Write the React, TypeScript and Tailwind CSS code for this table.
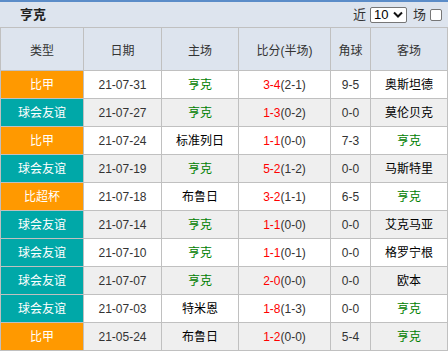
import React from "react";

type Row = {
  type: string;
  color: "o" | "t";
  date: string;
  home: string;
  score: string;
  half: string;
  corner: string;
  away: string;
};

const rows: Row[] = [
  { type: "比甲", color: "o", date: "21-07-31", home: "亨克", score: "3-4", half: "(2-1)", corner: "9-5", away: "奥斯坦德" },
  { type: "球会友谊", color: "t", date: "21-07-27", home: "亨克", score: "1-3", half: "(0-2)", corner: "0-0", away: "莫伦贝克" },
  { type: "比甲", color: "o", date: "21-07-24", home: "标准列日", score: "1-1", half: "(0-0)", corner: "7-3", away: "亨克" },
  { type: "球会友谊", color: "t", date: "21-07-19", home: "亨克", score: "5-2", half: "(1-2)", corner: "0-0", away: "马斯特里" },
  { type: "比超杯", color: "o", date: "21-07-18", home: "布鲁日", score: "3-2", half: "(1-1)", corner: "6-5", away: "亨克" },
  { type: "球会友谊", color: "t", date: "21-07-14", home: "亨克", score: "1-1", half: "(0-0)", corner: "0-0", away: "艾克马亚" },
  { type: "球会友谊", color: "t", date: "21-07-10", home: "亨克", score: "1-1", half: "(0-1)", corner: "0-0", away: "格罗宁根" },
  { type: "球会友谊", color: "t", date: "21-07-07", home: "亨克", score: "2-0", half: "(0-0)", corner: "0-0", away: "欧本" },
  { type: "球会友谊", color: "t", date: "21-07-03", home: "特米恩", score: "1-8", half: "(1-3)", corner: "0-0", away: "亨克" },
  { type: "比甲", color: "o", date: "21-05-24", home: "布鲁日", score: "1-2", half: "(0-0)", corner: "5-4", away: "亨克" },
];

const team = (name: string) => (
  <span className={name === "亨克" ? "text-[#008000]" : "text-black"}>{name}</span>
);

export default function App() {
  const font = { fontFamily: '"Liberation Sans", "Noto Sans CJK SC", sans-serif' };
  return (
    <div className="w-[448px] h-[351px] overflow-hidden bg-white text-[12px] text-[#333]" style={font}>
      <div className="h-[2px] bg-[#5b8cc8]" />
      <div className="h-[25px] bg-[#dde4ee] flex items-center justify-between">
        <span className="pl-[20px] text-[13px] font-bold text-[#222] pt-[1px]">亨克</span>
        <div className="flex items-center text-[13px] text-[#333] pr-[6px]">
          <span>近</span>
          <div className="ml-[4px] w-[37px] h-[16px] border border-[#767676] rounded-[2px] bg-white flex items-center justify-between pl-[3px] pr-[3px] text-[13px] text-black leading-none">
            <span>10</span>
            <svg width="10" height="7" viewBox="0 0 10 7">
              <path d="M1 1.5 L5 5.5 L9 1.5" stroke="#111" strokeWidth="2" fill="none" />
            </svg>
          </div>
          <span className="ml-[6px]">场</span>
          <div className="ml-[4px] w-[12px] h-[12px] border border-[#767676] rounded-[2px] bg-white" />
        </div>
      </div>
      <div className="grid grid-cols-[82px_77px_76px_91px_39px_76px] gap-px bg-[#c0c0c0] p-px">
        {["类型", "日期", "主场", "比分(半场)", "角球", "客场"].map((h) => (
          <div key={h} className="h-[42px] bg-[#dde4ee] flex items-center justify-center pt-[3px] text-[#333]">
            {h}
          </div>
        ))}
        {rows.map((r, i) => {
          const bg = i % 2 === 0 ? "bg-white" : "bg-[#efefef]";
          return (
            <React.Fragment key={i}>
              <div
                className={`h-[27px] flex items-center justify-center text-white ${
                  r.color === "o" ? "bg-[#ff9900]" : "bg-[#00a8a8]"
                }`}
              >
                {r.type}
              </div>
              <div className={`h-[27px] flex items-center justify-center ${bg}`}>{r.date}</div>
              <div className={`h-[27px] flex items-center justify-center ${bg}`}>{team(r.home)}</div>
              <div className={`h-[27px] flex items-center justify-center ${bg}`}>
                <span className="text-[#ff0000]">{r.score}</span>
                <span>{r.half}</span>
              </div>
              <div className={`h-[27px] flex items-center justify-center ${bg}`}>{r.corner}</div>
              <div className={`h-[27px] flex items-center justify-center ${bg}`}>{team(r.away)}</div>
            </React.Fragment>
          );
        })}
      </div>
    </div>
  );
}
